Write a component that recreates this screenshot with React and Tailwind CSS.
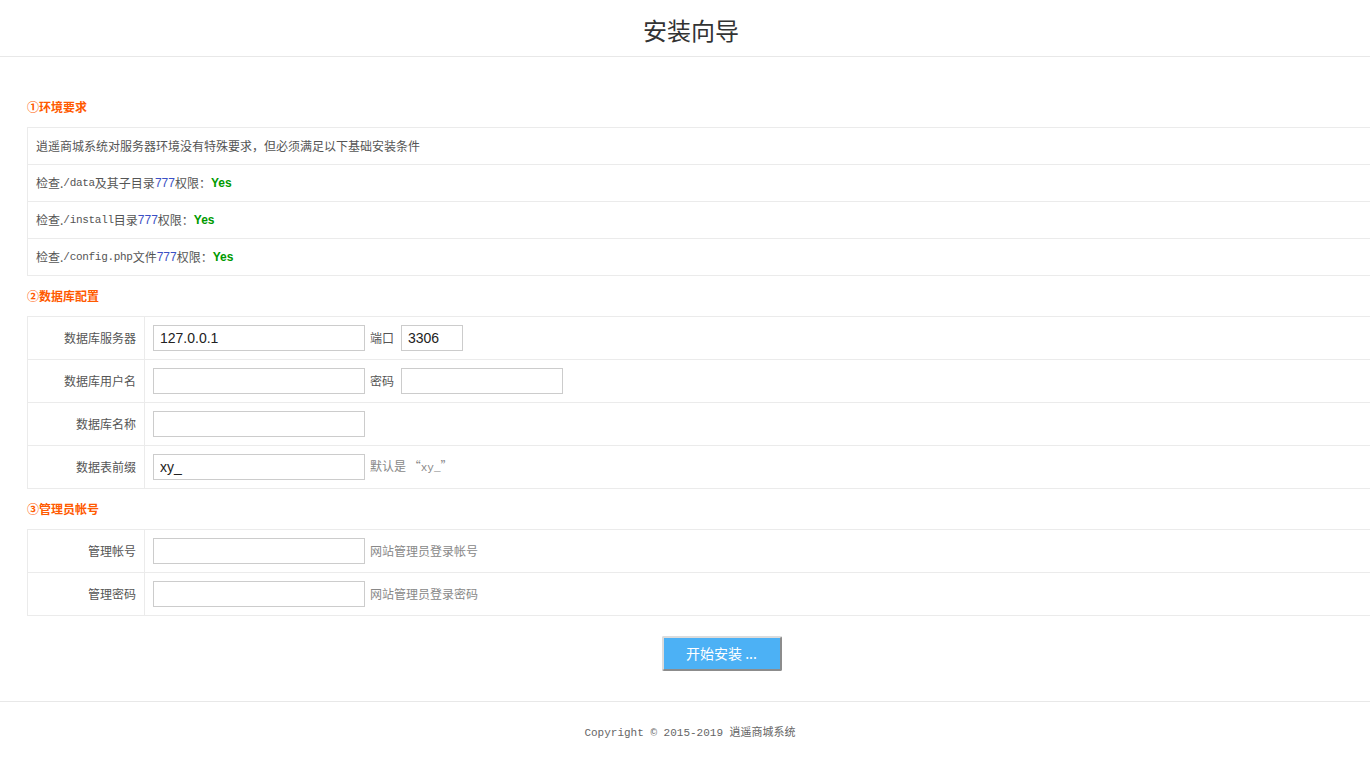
import { useState } from "react";

const cjk = "font-['SimSun','Noto_Sans_CJK_SC',sans-serif]";

const SectionTitle = ({ children }) => (
  <h2 className="h-5 leading-5 mb-[10px] text-[12px] font-bold text-[#ff5a00] font-['Noto_Sans_CJK_SC',sans-serif]">
    {children}
  </h2>
);

const CheckRow = ({ pre, path, post }) => (
  <div className="h-[37px] flex items-center pl-[8px] border-b border-[#ebebeb] text-[12px] text-[#555]">
    <span>{pre}</span>
    <span className="font-['Liberation_Mono',monospace] text-[11px] tracking-[-0.3px]">{path}</span>
    <span>{post}</span>
    <span className="text-[#3b4fc4] font-['Liberation_Sans',sans-serif]">777</span>
    <span>权限：</span>
    <span className="font-['Liberation_Sans',sans-serif] font-bold text-[#009a00]">Yes</span>
  </div>
);

const Input = ({ value, onChange, w = "w-[212px]" }) => (
  <input
    value={value}
    onChange={e => onChange(e.target.value)}
    className={`${w} h-[26px] border border-[#cccccc] px-[6px] text-[14px] text-[#222] font-['Liberation_Sans',sans-serif] outline-none`}
  />
);

const FormRow = ({ label, children }) => (
  <div className="h-[43px] flex border-b border-[#ebebeb]">
    <div className="w-[117px] shrink-0 border-r border-[#ebebeb] flex items-center justify-end pr-[8px] text-[12px] text-[#555]">
      {label}
    </div>
    <div className="flex items-center pl-[8px] gap-[5px] text-[12px] text-[#555]">{children}</div>
  </div>
);

const Hint = ({ children }) => <span className="text-[12px] text-[#888]">{children}</span>;

const App = () => {
  const [db, setDb] = useState({ host: "127.0.0.1", port: "3306", user: "", pass: "", name: "", prefix: "xy_", admin: "", adminPass: "" });
  const set = key => val => setDb(prev => ({ ...prev, [key]: val }));

  return (
    <div className={`min-h-screen bg-white overflow-hidden ${cjk}`}>
      <header className="h-[57px] border-b border-[#e8e8e8] flex items-center justify-center pl-[12px]">
        <h1 className="text-[24px] text-[#333] font-['Noto_Sans_CJK_SC',sans-serif] font-normal leading-none pt-[4px]">安装向导</h1>
      </header>

      <div className="pl-[27px] pt-[40px]">
        <SectionTitle>①环境要求</SectionTitle>
        <div className="w-[1400px] border-l border-t border-[#ebebeb]">
          <div className="h-[37px] flex items-center pl-[8px] border-b border-[#ebebeb] text-[12px] text-[#555]">
            逍遥商城系统对服务器环境没有特殊要求，但必须满足以下基础安装条件
          </div>
          <CheckRow pre="检查." path="/data" post="及其子目录" />
          <CheckRow pre="检查." path="/install" post="目录" />
          <CheckRow pre="检查." path="/config.php" post="文件" />
        </div>

        <div className="mt-[10px]">
          <SectionTitle>②数据库配置</SectionTitle>
        </div>
        <div className="w-[1400px] border-l border-t border-[#ebebeb]">
          <FormRow label="数据库服务器">
            <Input value={db.host} onChange={set("host")} />
            <span>端口</span>
            <span className="ml-[2px]"><Input value={db.port} onChange={set("port")} w="w-[62px]" /></span>
          </FormRow>
          <FormRow label="数据库用户名">
            <Input value={db.user} onChange={set("user")} />
            <span>密码</span>
            <span className="ml-[2px]"><Input value={db.pass} onChange={set("pass")} w="w-[162px]" /></span>
          </FormRow>
          <FormRow label="数据库名称">
            <Input value={db.name} onChange={set("name")} />
          </FormRow>
          <FormRow label="数据表前缀">
            <Input value={db.prefix} onChange={set("prefix")} />
            <Hint>默认是 “<span className="font-['Liberation_Mono',monospace] text-[11px]">xy_</span>”</Hint>
          </FormRow>
        </div>

        <div className="mt-[10px]">
          <SectionTitle>③管理员帐号</SectionTitle>
        </div>
        <div className="w-[1400px] border-l border-t border-[#ebebeb]">
          <FormRow label="管理帐号">
            <Input value={db.admin} onChange={set("admin")} />
            <Hint>网站管理员登录帐号</Hint>
          </FormRow>
          <FormRow label="管理密码">
            <Input value={db.adminPass} onChange={set("adminPass")} />
            <Hint>网站管理员登录密码</Hint>
          </FormRow>
        </div>
      </div>

      <div className="flex justify-center pt-[20px] pb-[30px] pl-[73px]">
        <button className="w-[120px] h-[35px] bg-[#4cb1f5] text-white text-[14px] border-2 border-t-[#dcdcdc] border-l-[#dcdcdc] border-r-[#8c8c8c] border-b-[#8c8c8c] rounded-[2px] font-['Noto_Sans_CJK_SC',sans-serif]">
          开始安装 ...
        </button>
      </div>

      <footer className="border-t border-[#e8e8e8] pt-[23px] flex justify-center pl-[10px]">
        <p className="text-[11px] text-[#666] font-['Liberation_Mono','Noto_Sans_CJK_SC',monospace]">
          Copyright © 2015-2019 逍遥商城系统
        </p>
      </footer>
    </div>
  );
};

export default App;
